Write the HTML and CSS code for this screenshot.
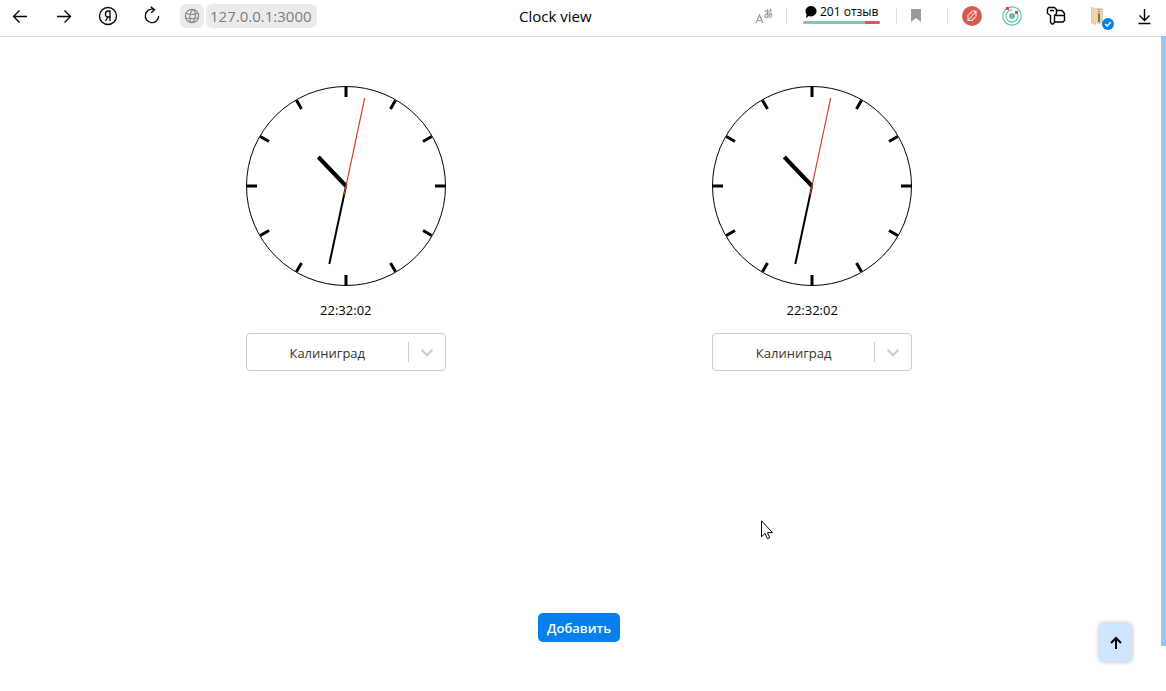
FILE: index.html
```html
<!DOCTYPE html>
<html lang="ru">
<head>
<meta charset="utf-8">
<title>Clock view</title>
<link rel="stylesheet" href="styles.css">
</head>
<body>
<svg class="sprite" aria-hidden="true">
  <symbol id="clock-face" viewBox="0 0 200 200">
    <circle cx="100" cy="100" r="99.5" fill="none" stroke="#000"/>
    <g id="ticks" stroke="#000" stroke-width="3">
      <path d="M100 0v11M100 189v11M0 100h11M189 100h11"/>
      <path d="M149.5 14.3l-5 8.7M185.7 50.5l-8.7 5M185.7 149.5l-8.7-5M149.5 185.7l-5-8.7M50.5 185.7l5-8.7M14.3 149.5l8.7-5M14.3 50.5l8.7 5M50.5 14.3l5 8.7"/>
    </g>
    <path d="M100 100L72.3 71" stroke="#000" stroke-width="4"/>
    <path d="M100 100L83.3 178" stroke="#000" stroke-width="2"/>
    <path d="M98.2 108.5L118.7 12" stroke="#d63a24" stroke-width="1.2"/>
  </symbol>
</svg>

<header class="toolbar">
  <nav class="nav" aria-label="Навигация">
    <button class="nav-button" aria-label="Назад"><svg class="icon" viewBox="0 0 20 20"><path d="M17 10.5H3.5M9.5 4.5l-6 6 6 6"/></svg></button>
    <button class="nav-button" aria-label="Вперёд"><svg class="icon" viewBox="0 0 20 20"><path d="M3 10.5h13.5M10.5 4.5l6 6-6 6"/></svg></button>
    <button class="nav-button" aria-label="Яндекс"><svg class="icon" viewBox="0 0 20 20"><circle cx="10" cy="10" r="8.5"/><path d="M12 15V5h-1.7C6.500 5 6.500 11 10 11h2M10 11l-2.500 4"/></svg></button>
    <button class="nav-button" aria-label="Обновить"><svg class="icon" viewBox="0 0 20 20"><path d="M12 3.500A6.700 6.700 0 1 0 16.700 10M8.800.8l3.700 2.900-3.300 3"/></svg></button>
  </nav>
  <div class="address">
    <button class="site-button" aria-label="О сайте"><svg class="globe" viewBox="0 0 16 16"><circle cx="8" cy="8" r="6.700"/><path d="M2 5.500c3.500 1 8.500 1 12 0M1.500 9.500c4 1.500 9 1.500 13 0M9 1.300C5.500 4 5 11 7 14.700M9.500 1.300c2.500 4 2.500 9-1 13.400"/></svg></button>
    <button class="url">127.0.0.1:3000</button>
  </div>
  <div class="page-title">Clock view</div>
  <div class="tools">
    <button class="tool translate" aria-label="Перевести"><svg class="translate-icon" viewBox="0 0 18 16"><path d="M1 15l3.500-8L8 15M2.200 12.500h4.600"/><path d="M9 3h8M12.300 1c-.2 3 0 5 .8 8.500M15.500 4.500c-.8 3.500-3 5-5 5-2-1.500.5-4.500 3.500-4.500 3.500 0 3.500 3.500.5 5M15.500.5v2"/></svg></button>
    <span class="divider divider-feedback"></span>
    <a class="feedback" href="#reviews">
      <span class="feedback-label"><svg class="bubble" viewBox="0 0 12 12"><path d="M6 0a5.700 5.200 0 1 1-2.300 10L1 12l.6-3.500A5.300 5.300 0 0 1 6 0z"/></svg>201 отзыв</span>
      <span class="rating"></span>
    </a>
    <span class="divider divider-bookmark"></span>
    <button class="tool bookmark" aria-label="Закладка"><svg class="bookmark-icon" viewBox="0 0 10 14"><path d="M0 0h10v13L5 9l-5 4z"/></svg></button>
    <span class="divider divider-extensions"></span>
    <button class="tool" aria-label="Расширение"><svg class="tool-icon" viewBox="0 0 20 20"><circle cx="10" cy="10" r="10" fill="#d65a4e"/><path d="M6 9v5.500h4.500M9.500 5H14v5.500M6.500 14l7.200-8.500M6.500 8.500L10 6M10 14l3.700-3" fill="none" stroke="#fbe6e2" stroke-width="1.100"/></svg></button>
    <button class="tool tool-orbit" aria-label="Расширение"><svg class="tool-icon" viewBox="0 0 20 20"><g fill="none" stroke="#68c4ae" stroke-width="1.300"><circle cx="10" cy="10" r="9.200"/><path d="M10 4a6 6 0 1 0 5.700 4" stroke="#73bed0"/></g><circle cx="10" cy="10" r="3" fill="#5dc49b"/><path d="M4 1h3v3H4zM13 5h3v3h-3z" fill="#d44d40"/></svg></button>
    <button class="tool tool-wide" aria-label="Пароли"><svg class="tool-icon key-icon" viewBox="0 0 20 20"><path d="M2.500 1.500h6l2 2v4L8.500 9.500v7l-1.500 1.500h-1l-1.500-1.500v-7L1.500 7.500v-4zM4 4.500h4M10.500 4.500h5.500l2.500 3v7l-1.500 1.500H8.500M8.500 9.500h10"/></svg></button>
    <button class="tool tool-wide" aria-label="Загрузки"><svg class="archive-icon" viewBox="0 0 24 28"><path d="M1 5l5 1v17l-5-2z" fill="#f2c490"/><path d="M2 6h11v15H2z" fill="#f5d0a2"/><path d="M7 6h4v16H7z" fill="#ddd3c3"/><path d="M9 7v6" stroke="#8b9499" stroke-dasharray="1 1" stroke-width="2"/><path d="M9 12v8" stroke="#6b7880" stroke-width="2"/><circle cx="18" cy="22" r="6" fill="#0880e8"/><path d="M15.200 22l2 2 3.600-3.800" fill="none" stroke="#fff" stroke-width="1.500"/></svg></button>
    <button class="tool tool-orbit" aria-label="Скачать"><svg class="tool-icon key-icon" viewBox="0 0 20 20"><path d="M10.500 3v11.500M5.500 9.500l5 5 5-5M4.500 17.500h12"/></svg></button>
  </div>
</header>

<main class="page">
  <div class="clocks">
    <section class="clock">
      <svg class="face" role="img" aria-label="22:32:02"><use href="#clock-face"/></svg>
      <time class="time">22:32:02</time>
      <div class="city">
        <select class="city-select" aria-label="Город"><option>Калиниград</option></select>
        <svg class="chevron" viewBox="0 0 12 8"><path d="M1.300 1.500L6 6l4.700-4.500"/></svg>
      </div>
    </section>
    <section class="clock">
      <svg class="face" role="img" aria-label="22:32:02"><use href="#clock-face"/></svg>
      <time class="time">22:32:02</time>
      <div class="city">
        <select class="city-select" aria-label="Город"><option>Калиниград</option></select>
        <svg class="chevron" viewBox="0 0 12 8"><path d="M1.300 1.500L6 6l4.700-4.500"/></svg>
      </div>
    </section>
  </div>
  <button class="add">Добавить</button>
</main>

<div class="scroll-thumb"></div>
<button class="to-top" aria-label="Наверх"><svg class="to-top-icon" viewBox="0 0 14 14"><path d="M7 13V2M2 7l5-5 5 5"/></svg></button>
<svg class="pointer" viewBox="0 0 13 20"><path d="M.5.800v16l3.600-3.500 2.300 5.400 2.300-1-2.300-5.100h5.100z"/></svg>
</body>
</html>
```

FILE: styles.css
```css
* { box-sizing: border-box; }

body {
  margin: 0;
  min-height: 100vh;
  display: flex;
  flex-direction: column;
  background: #fff;
  color: #000;
  font-family: "Open Sans", "Noto Sans", sans-serif;
  font-size: 13px;
}

button, select { font: inherit; color: inherit; }

button {
  border: 0;
  padding: 0;
  background: none;
  cursor: pointer;
}

.sprite { position: absolute; width: 0; height: 0; }

/* Browser toolbar */
.toolbar {
  display: flex;
  align-items: center;
  padding: 0 12px 4px 0;
  border-bottom: 1px solid #e0e0e0;
}

.nav, .address, .tools { display: flex; align-items: center; height: 32px; }
.nav { gap: 4px; }

.nav-button {
  display: grid;
  place-items: center;
  width: 40px;
  height: 32px;
}

.icon {
  width: 20px;
  height: 20px;
  fill: none;
  stroke: #000;
  stroke-width: 1.3;
}

.address { gap: 2px; margin-left: 8px; }

.site-button, .url {
  height: 24px;
  border-radius: 6px;
  background: #ebebeb;
}

.site-button { display: grid; place-items: center; width: 24px; }
.url { padding: 0 5px 0 4px; font-size: 15px; line-height: 24px; color: #7b7b7b; }

.globe {
  width: 16px;
  height: 16px;
  fill: none;
  stroke: #858a8a;
  stroke-width: 1.2;
}

.page-title {
  flex: 1;
  padding-left: 44px;
  font-size: 15px;
  line-height: 32px;
  text-align: center;
}

.tool { display: grid; place-items: center; }
.tool-icon { width: 20px; height: 20px; }
.tool-orbit { margin-left: 20px; }
.tool-wide { margin-left: 24px; }
.key-icon { fill: none; stroke: #000; stroke-width: 1.4; }
.archive-icon { width: 24px; height: 28px; }

.translate { width: 28px; }

.translate-icon {
  width: 18px;
  height: 16px;
  fill: none;
  stroke: #999;
  stroke-width: 1.2;
}

.divider { width: 1px; height: 16px; background: #e0e0e0; }
.divider-feedback { margin: 0 16px 0 8px; }
.divider-bookmark { margin: 0 5px 0 16px; }
.divider-extensions { margin: 0 14px 0 17px; }

.feedback {
  min-width: 77px;
  padding-bottom: 4px;
  color: #000;
  text-decoration: none;
}

.feedback-label {
  display: flex;
  align-items: center;
  gap: 3px;
  padding-left: 2px;
  font-size: 12px;
  line-height: 16px;
}

.bubble { width: 12px; height: 12px; }

.rating {
  display: block;
  height: 3px;
  margin-top: 1px;
  border-radius: 2px;
  background: linear-gradient(to right, #7fc8a0 80%, #d65a50 80%);
}

.bookmark { width: 28px; }
.bookmark-icon { width: 10px; height: 14px; fill: #999; }

/* Clocks */
.page {
  flex: 1;
  display: flex;
  flex-direction: column;
  align-items: center;
  margin-right: 8px;
  padding: 49px 0;
}

.clocks {
  display: flex;
  flex-wrap: wrap;
  justify-content: space-around;
  width: 80vw;
}

.clock { display: flex; flex-direction: column; width: 200px; }
.face { width: 200px; height: 200px; }

.time { margin: 15px 0 13px; line-height: 19px; text-align: center; }

.city { position: relative; }

.city-select {
  appearance: none;
  display: block;
  width: 100%;
  height: 38px;
  padding: 2px 37px 0 0;
  border: 1px solid #ccc;
  border-radius: 4px;
  background: linear-gradient(#ccc, #ccc) right 36px center / 1px 20px no-repeat #fff;
  color: #333;
  text-align: center;
  text-align-last: center;
}

.chevron {
  position: absolute;
  top: 16px;
  right: 13px;
  width: 12px;
  height: 8px;
  fill: none;
  stroke: #ccc;
  stroke-width: 2.4;
  stroke-linecap: round;
  pointer-events: none;
}

.add {
  height: 29px;
  margin-top: auto;
  padding: 0 9px;
  border-radius: 5px;
  background: #0580ec;
  color: #fff;
  font-weight: 600;
}

/* Overlays */
.scroll-thumb {
  position: fixed;
  top: 36px;
  right: 0;
  bottom: 45px;
  width: 5px;
  background: #90c8f8;
}

.to-top {
  position: fixed;
  right: 34px;
  bottom: 29px;
  display: grid;
  place-items: center;
  width: 33px;
  height: 39px;
  border-radius: 5px;
  background: #cde6fe;
  box-shadow: 0 0 4px rgba(0, 0, 0, 0.3);
}

.to-top-icon {
  width: 14px;
  height: 14px;
  fill: none;
  stroke: #000;
  stroke-width: 2;
}

.pointer {
  position: absolute;
  top: 520px;
  left: 761px;
  width: 13px;
  height: 20px;
  fill: #fff;
  stroke: #000;
  pointer-events: none;
}
```
